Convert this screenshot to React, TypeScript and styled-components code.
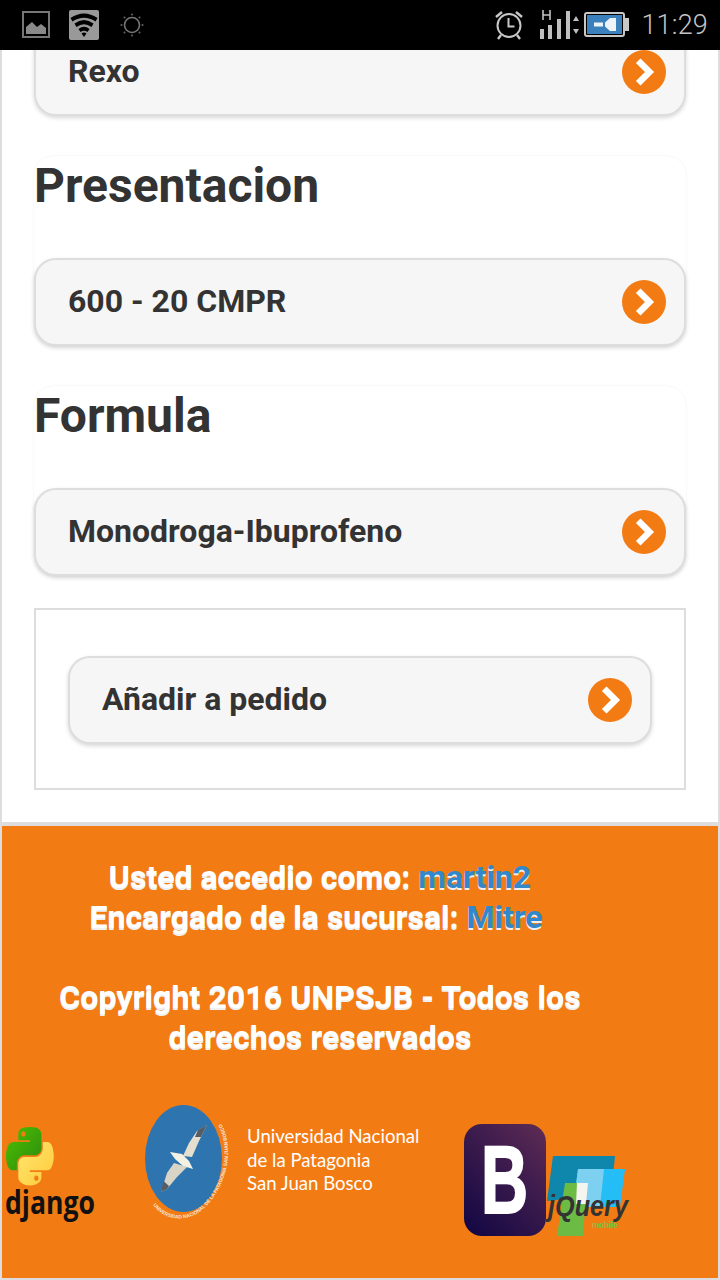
import React, { ReactElement } from "react";
import styled, { createGlobalStyle } from "styled-components";

const GlobalStyle = createGlobalStyle`
  html, body {
    margin: 0;
    padding: 0;
    background: #fff;
  }
  * {
    box-sizing: border-box;
  }
`;

const Screen = styled.div`
  width: 720px;
  height: 1280px;
  display: flex;
  flex-direction: column;
  overflow: hidden;
  font-family: Roboto, "Liberation Sans", sans-serif;
`;

const StatusBar = styled.div`
  height: 50px;
  flex-shrink: 0;
  background: #000;
  display: flex;
  align-items: center;
  justify-content: space-between;
  padding: 0 12px 0 22px;
`;

const StatusGroup = styled.div`
  display: flex;
  align-items: center;
`;

const Clock = styled.span`
  font-size: 27px;
  font-weight: 300;
  color: #c4c4c4;
  margin-left: 11px;
  letter-spacing: 0.2px;
`;

const Main = styled.div`
  flex: 1;
  min-height: 0;
  overflow: hidden;
  display: flex;
  flex-direction: column;
  justify-content: flex-end;
  padding: 0 32px 32px;
  border-left: 2px solid #ddd;
  border-right: 2px solid #ddd;
  background: #fff;
`;

const Section = styled.section`
  flex-shrink: 0;
  margin-top: 40px;
  background: #fff;
  border-radius: 20px;
  box-shadow: 0 0 2px rgba(0, 0, 0, 0.08);
`;

const Title = styled.h2`
  margin: 0;
  height: 102px;
  font-size: 48px;
  line-height: 60px;
  font-weight: 700;
  color: #333;
`;

const ActionButton = styled.div`
  height: 88px;
  flex-shrink: 0;
  display: flex;
  align-items: center;
  justify-content: space-between;
  padding: 0 18px 0 32px;
  border: 2px solid #ddd;
  border-radius: 22px;
  background: #f6f6f6;
  box-shadow: 0 2px 4px rgba(0, 0, 0, 0.16);
  font-size: 32px;
  font-weight: 700;
  color: #333;
`;

const ActionLabel = styled.span`
  padding-bottom: 2px;
`;

const OrderBox = styled.div`
  flex-shrink: 0;
  margin-top: 32px;
  padding: 46px 32px 44px;
  border: 2px solid #ddd;
`;

const Footer = styled.footer`
  height: 458px;
  flex-shrink: 0;
  background: #f37b14;
  border: 2px solid #ddd;
  border-top-width: 4px;
  padding-top: 31px;
  display: flex;
  flex-direction: column;
`;

const FooterText = styled.div`
  width: 636px;
  text-align: center;
  font-size: 32px;
  line-height: 40px;
  font-weight: 700;
  color: #fff;
  text-shadow: 0 2px 0 #f0f0f0;
`;

const UserLink = styled.span`
  color: #3388cc;
`;

const Copyright = styled.div`
  margin-top: 40px;
  letter-spacing: 0.1px;
`;

const LogoRow = styled.div`
  display: flex;
  align-items: flex-start;
  margin-top: 48px;
`;

const UniversityLogo = styled.div`
  display: flex;
  align-items: flex-start;
  margin-left: 43px;
`;

const UniversityName = styled.div`
  margin: 20px 0 0 16px;
  width: 180px;
  font-family: Lato, sans-serif;
  font-size: 18.6px;
  line-height: 23.5px;
  font-weight: 400;
  color: #fff;
  white-space: nowrap;
`;

const BootstrapLogo = styled.div`
  width: 82px;
  height: 112px;
  margin: 19px 0 0 37px;
  border-radius: 18px;
  background: linear-gradient(45deg, #100644 0%, #3a1a4c 55%, #5f2c55 100%);
  color: #fff;
  font-family: "Liberation Sans", sans-serif;
  font-size: 96px;
  line-height: 112px;
  font-weight: 700;
  text-align: center;
  overflow: hidden;
`;

const BootstrapLetter = styled.span`
  display: inline-block;
  transform: scaleX(0.68);
  -webkit-text-stroke: 2px #fff;
`;

const JqueryLogo = styled.svg`
  margin-top: 45px;
  flex-shrink: 0;
`;

const Chevron = (): ReactElement => (
  <svg width="44" height="44" viewBox="0 0 44 44">
    <circle cx="22" cy="22" r="22" fill="#f37b14" />
    <polyline
      points="18.5,13 27.5,22 18.5,31"
      fill="none"
      stroke="#fff"
      strokeWidth="6.5"
      strokeLinecap="square"
    />
  </svg>
);

const Action = ({ label }: { label: string }): ReactElement => (
  <ActionButton>
    <ActionLabel>{label}</ActionLabel>
    <Chevron />
  </ActionButton>
);

const StatusLeft = (): ReactElement => (
  <StatusGroup>
    <svg width="28" height="28" viewBox="0 0 28 28">
      <rect x="1" y="1" width="26" height="25" fill="none" stroke="#777" strokeWidth="2" />
      <path d="M4 23 V16 L10 11 L15 16 L19 13 L24 17 V23 Z" fill="#8a8a8a" />
    </svg>
    <svg width="30" height="30" viewBox="0 0 30 30" style={{ marginLeft: 19 }}>
      <rect width="30" height="30" rx="2" fill="#999" />
      <path d="M1.5 8 Q15 -1 28.5 8 L26.5 11.5 Q15 4 3.5 11.5 Z" fill="#000" />
      <path d="M5.5 13.5 Q15 6.5 24.5 13.5 L22.5 17 Q15 11.5 7.5 17 Z" fill="#000" />
      <path d="M9.5 19 Q15 14.5 20.5 19 L18.5 22 Q15 19.5 11.5 22 Z" fill="#000" />
      <path d="M12.5 23.5 Q15 21.5 17.5 23.5 L15 27 Z" fill="#000" />
    </svg>
    <svg width="24" height="24" viewBox="0 0 24 24" style={{ marginLeft: 21 }}>
      <circle cx="12" cy="12" r="7.5" fill="none" stroke="#777" strokeWidth="1.6" />
      <g fill="#666">
        <circle cx="12" cy="1.5" r="1" />
        <circle cx="12" cy="22.5" r="1" />
        <circle cx="1.5" cy="12" r="1" />
        <circle cx="22.5" cy="12" r="1" />
        <circle cx="4.5" cy="4.5" r="1" />
        <circle cx="19.5" cy="4.5" r="1" />
        <circle cx="4.5" cy="19.5" r="1" />
        <circle cx="19.5" cy="19.5" r="1" />
      </g>
    </svg>
  </StatusGroup>
);

const StatusRight = (): ReactElement => (
  <StatusGroup>
    <svg width="30" height="30" viewBox="0 0 30 30">
      <circle cx="15" cy="15.5" r="11.5" fill="none" stroke="#c8c8c8" strokeWidth="2" />
      <path d="M14.5 8 V16.5 H20.5" fill="none" stroke="#c8c8c8" strokeWidth="2" />
      <path d="M2 7 L8 2 M28 7 L22 2 M7 25 L4 29 M23 25 L26 29" stroke="#c8c8c8" strokeWidth="2.4" />
    </svg>
    <svg width="40" height="32" viewBox="0 0 40 32" style={{ marginLeft: 15 }}>
      <path d="M4 1 V11 M11 1 V11 M4 6 H11" stroke="#c0c0c0" strokeWidth="1.6" fill="none" />
      <g fill="#c0c0c0">
        <rect x="1" y="20" width="4" height="10" />
        <rect x="9" y="16" width="4" height="14" />
        <rect x="18" y="10" width="4" height="20" />
        <rect x="27" y="2" width="4" height="28" />
        <path d="M34 12 L37 7 L40 12 Z M34 20 L37 25 L40 20 Z" />
      </g>
    </svg>
    <svg width="46" height="26" viewBox="0 0 46 26" style={{ marginLeft: 5 }}>
      <rect x="1" y="1" width="39" height="23" rx="2" fill="#000" stroke="#c8c8c8" strokeWidth="2" />
      <rect x="3" y="3" width="35" height="19" fill="#3a80bd" />
      <rect x="41" y="6" width="4" height="13" fill="#c8c8c8" />
      <path d="M10 10.5 H19 V14.5 H10 Z M21 10.5 L26 6 H32 V19 H26 L21 14.5 Z" fill="#eef3f7" />
    </svg>
    <Clock>11:29</Clock>
  </StatusGroup>
);

const DjangoLogo = (): ReactElement => (
  <svg width="100" height="110" viewBox="0 0 100 110" style={{ flexShrink: 0, marginTop: 20 }}>
    <defs>
      <linearGradient id="pyGreen" x1="0" y1="0" x2="1" y2="1">
        <stop offset="0" stopColor="#4fc000" />
        <stop offset="1" stopColor="#2a8a10" />
      </linearGradient>
      <linearGradient id="pyYellow" x1="0" y1="0" x2="1" y2="1">
        <stop offset="0" stopColor="#ffe873" />
        <stop offset="1" stopColor="#ffc938" />
      </linearGradient>
    </defs>
    <g transform="translate(4 2) scale(0.43 0.52)">
      <path
        fill="url(#pyGreen)"
        d="M54.919 0.001c-4.584.022-8.961.413-12.812 1.095C30.76 3.1 28.7 7.3 28.7 15.032v10.219h26.813v3.406H18.638c-7.793 0-14.616 4.684-16.75 13.594-2.462 10.213-2.571 16.586 0 27.25 1.906 7.938 6.458 13.594 14.25 13.594h9.218v-12.25c0-8.85 7.657-16.656 16.75-16.656h26.781c7.454 0 13.406-6.138 13.406-13.625V15.032c0-7.266-6.13-12.725-13.406-13.937C64.282.328 59.502-.02 54.919.001zM40.419 8.22c2.77 0 5.031 2.299 5.031 5.125 0 2.816-2.262 5.094-5.031 5.094-2.78 0-5.031-2.278-5.031-5.094 0-2.826 2.252-5.125 5.031-5.125z"
      />
      <path
        fill="url(#pyYellow)"
        d="M85.638 28.657v11.906c0 9.231-7.826 17-16.75 17H42.106c-7.336 0-13.406 6.278-13.406 13.625v25.531c0 7.266 6.319 11.54 13.406 13.625 8.487 2.496 16.626 2.947 26.781 0 6.75-1.954 13.406-5.888 13.406-13.625V86.5H55.513v-3.405H95.7c7.793 0 10.696-5.436 13.406-13.594 2.8-8.399 2.68-16.476 0-27.25-1.926-7.757-5.604-13.594-13.406-13.594zM70.575 93.313c2.78 0 5.031 2.278 5.031 5.094 0 2.826-2.252 5.125-5.031 5.125-2.77 0-5.031-2.299-5.031-5.125 0-2.816 2.262-5.094 5.031-5.094z"
      />
    </g>
    <text
      x="3"
      y="89"
      fontFamily="'Open Sans', sans-serif"
      fontWeight="700"
      fontSize="32"
      textLength="90"
      lengthAdjust="spacingAndGlyphs"
      fill="#111"
    >
      django
    </text>
  </svg>
);

const UniversitySeal = (): ReactElement => (
  <svg width="88" height="122" viewBox="0 0 88 122" style={{ flexShrink: 0, marginRight: -2 }}>
    <defs>
      <path id="sealArc" d="M8 100 C20 116 42 118 57 105 C72 92 83 70 83 48 C83 36 81 28 77 20" />
    </defs>
    <ellipse cx="38.5" cy="53.5" rx="38.5" ry="53.5" fill="#2e75b0" />
    <path d="M62 20 L52 26 L44 38 L38 51 L47 52 L54 36 Z" fill="#e4dfcf" />
    <path d="M62 20 L53 25 L50 32 L56 32 Z" fill="#565d64" />
    <path d="M29 58 L22 68 L16 87 L22 84 L32 72 L42 62 Z" fill="#d9d5c6" />
    <path d="M16 87 L18.5 76 L24 81 L22 84 Z" fill="#565d64" />
    <path d="M25 47 L37 49 L44 56 L48 64 L38 61 L30 54 Z" fill="#f3f0e4" />
    <text fontFamily="'Liberation Sans', sans-serif" fontSize="5" fontWeight="700" fill="#f6e8d8">
      <textPath href="#sealArc" textLength="150" lengthAdjust="spacingAndGlyphs">
        UNIVERSIDAD NACIONAL DE LA PATAGONIA SAN JUAN BOSCO
      </textPath>
    </text>
  </svg>
);

const Jquery = (): ReactElement => (
  <JqueryLogo width="84" height="90" viewBox="0 0 84 90">
    <polygon points="7,6 69,6 65,44 1,51" fill="#0f86ac" />
    <polygon points="32,19 79,19 74,57 27,57" fill="#24bdf5" />
    <polygon points="32,19 58,19 54,57 27,57" fill="#7dd0f0" />
    <polygon points="19,33 41,33 37,86 11,86" fill="#6cbb44" />
    <polygon points="31,33 42,33 40,54 30,54" fill="#f4f4f0" />
    <text
      x="2"
      y="66"
      fontFamily="'Liberation Sans', sans-serif"
      fontStyle="italic"
      fontWeight="700"
      fontSize="30"
      textLength="80"
      lengthAdjust="spacingAndGlyphs"
      fill="#333"
    >
      jQuery
    </text>
    <text
      x="46"
      y="78"
      fontFamily="'Liberation Sans', sans-serif"
      fontWeight="700"
      fontSize="9"
      textLength="26"
      lengthAdjust="spacingAndGlyphs"
      fill="#74c440"
    >
      mobile
    </text>
  </JqueryLogo>
);

const App = (): ReactElement => (
  <Screen>
    <GlobalStyle />
    <StatusBar>
      <StatusLeft />
      <StatusRight />
    </StatusBar>
    <Main>
      <Action label="Rexo" />
      <Section>
        <Title>Presentacion</Title>
        <Action label="600 - 20 CMPR" />
      </Section>
      <Section>
        <Title>Formula</Title>
        <Action label="Monodroga-Ibuprofeno" />
      </Section>
      <OrderBox>
        <Action label="Añadir a pedido" />
      </OrderBox>
    </Main>
    <Footer>
      <FooterText>
        Usted accedio como: <UserLink>martin2</UserLink>
        <br />
        Encargado de la sucursal: <UserLink>Mitre</UserLink>&nbsp;
        <Copyright>Copyright 2016 UNPSJB - Todos los derechos reservados</Copyright>
      </FooterText>
      <LogoRow>
        <DjangoLogo />
        <UniversityLogo>
          <UniversitySeal />
          <UniversityName>
            Universidad Nacional
            <br />
            de la Patagonia
            <br />
            San Juan Bosco
          </UniversityName>
        </UniversityLogo>
        <BootstrapLogo>
          <BootstrapLetter>B</BootstrapLetter>
        </BootstrapLogo>
        <Jquery />
      </LogoRow>
    </Footer>
  </Screen>
);

export default App;
